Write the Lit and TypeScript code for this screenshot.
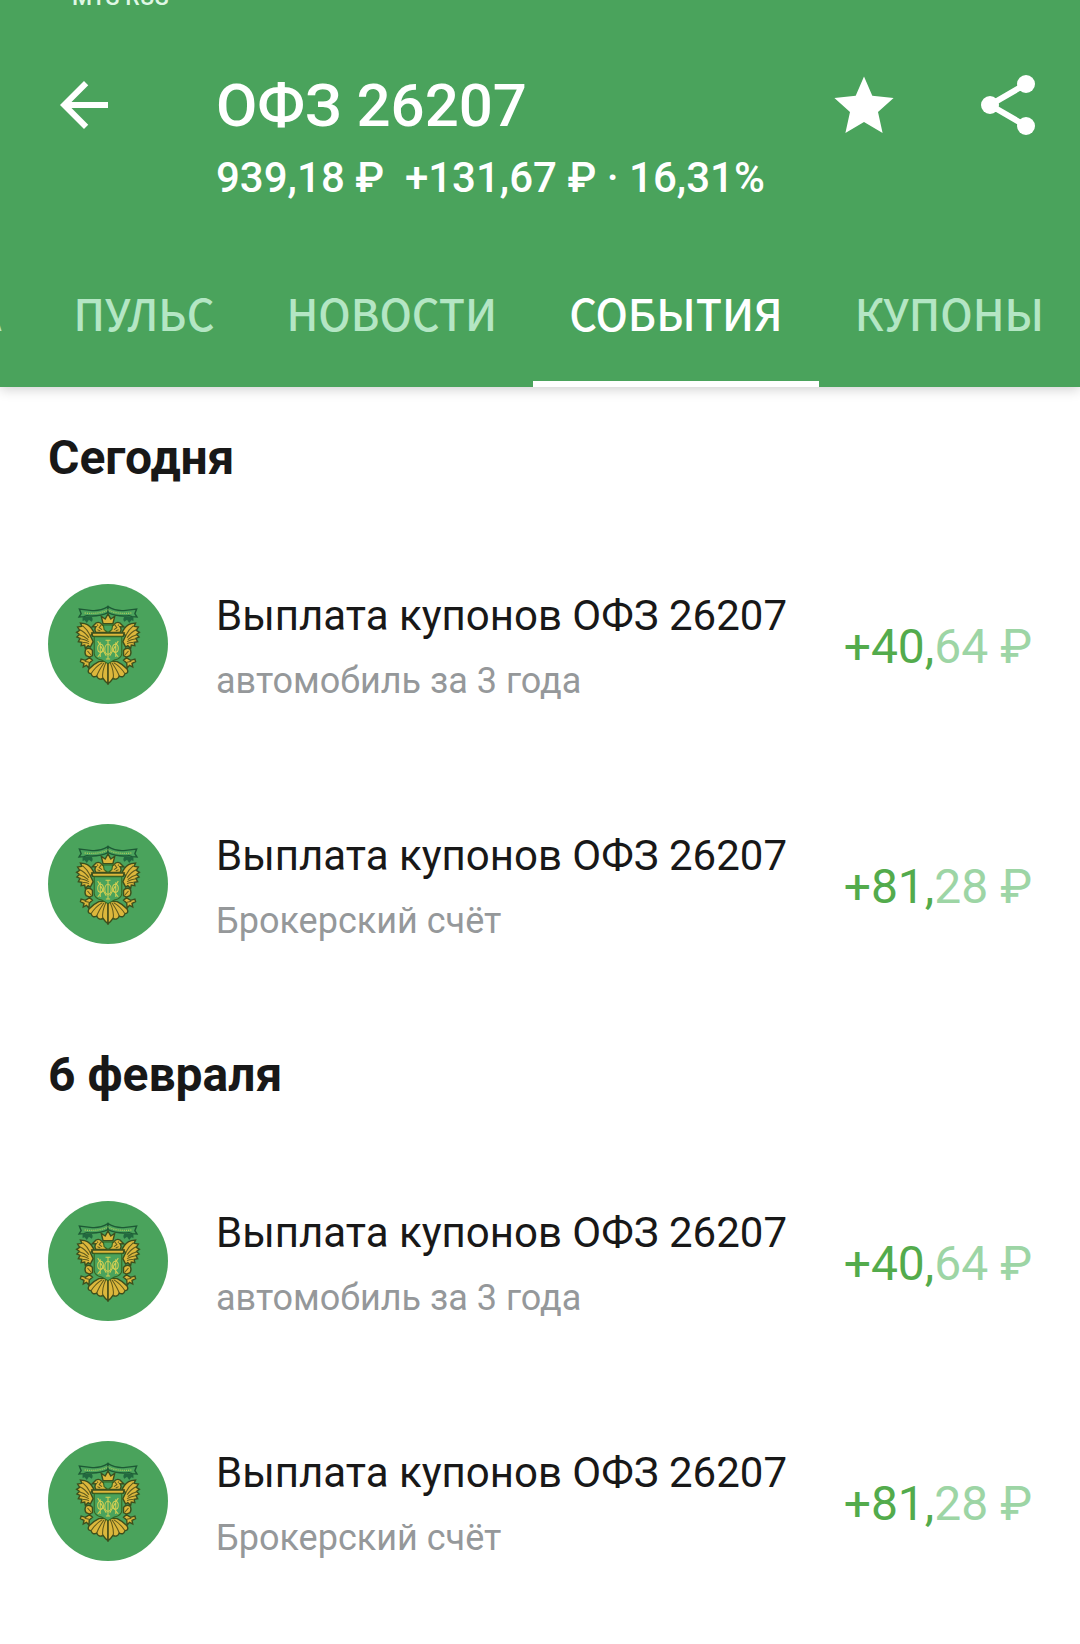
import { html, svg, css, LitElement } from 'lit';
import { customElement, property, state } from 'lit/decorators.js';
import { classMap } from 'lit/directives/class-map.js';

interface CouponEvent {
    title: string;
    account: string;
    whole: string;
    fraction: string;
}

interface EventGroup {
    date: string;
    events: CouponEvent[];
}

const coupons: CouponEvent[] = [
    { title: 'Выплата купонов ОФЗ 26207', account: 'автомобиль за 3 года', whole: '+40,', fraction: '64 ₽' },
    { title: 'Выплата купонов ОФЗ 26207', account: 'Брокерский счёт', whole: '+81,', fraction: '28 ₽' },
];

const groups: EventGroup[] = [
    { date: 'Сегодня', events: coupons },
    { date: '6 февраля', events: coupons },
];

const tabs = ['А', 'ПУЛЬС', 'НОВОСТИ', 'СОБЫТИЯ', 'КУПОНЫ'];

// One half of the eagle, drawn left of x = 0 and mirrored for the other side
const eagleHalf = svg`
    <path class="ribbon" d="M0 35 Q-24 50 -50 46 L-81 42 L-76 56 L-82 66 L-68 65 L-60 62 Q-26 66 0 53Z" />
    <path class="shade" d="M-72 66 L-48 64 Q-40 72 -46 80 L-54 74 L-60 84 L-66 76 L-72 78Z" />
    <path class="gold" d="M-40 112 Q-50 90 -66 86 L-78 84 L-74 94 L-86 96 L-80 106 L-89 112 L-81 118 L-88 126 L-79 130 L-84 140 L-74 142 L-76 152 L-66 150 L-64 160 L-56 152 L-50 156 L-42 140 L-50 122Z" />
    <path class="line" d="M-72 92 Q-58 104 -50 122 M-80 104 Q-66 110 -54 128 M-82 119 Q-68 122 -56 134 M-79 131 Q-66 132 -54 140 M-72 143 Q-62 142 -54 146" />
    <path class="gold" d="M-4 112 Q-8 94 -16 90 Q-24 78 -34 84 L-45 96 L-34 95 Q-40 104 -34 112Z" />
    <path class="line" d="M-18 88 L-25 98 L-17 104 M-31 89 L-28 92 M-30 104 L-22 108" />
    <path class="gold" d="M-44 166 Q-52 156 -62 162 Q-68 172 -62 182 L-52 186 L-44 182Z" />
    <path class="gold" d="M-52 188 L-64 196 L-76 192 L-78 200 L-68 205 L-70 216 L-61 211 L-54 219 L-53 204 L-44 196Z" />
    <path class="line" d="M-58 168 L-48 180 M-66 199 L-54 202" />
    <path class="gold" d="M-6 198 L-26 200 Q-42 208 -54 222 Q-60 234 -48 236 Q-44 250 -32 243 Q-27 257 -14 250 Q-8 260 0 266 L0 198Z" />
    <path class="line" d="M-16 203 Q-36 216 -47 235 M-11 203 Q-26 226 -32 243 M-6 203 Q-17 228 -15 250 M0 206 V262" />
`;

const emblem = html`
    <svg viewBox="0 0 360 360" aria-hidden="true">
        <g transform="translate(180 33) scale(1.06 1)">
            <g>${eagleHalf}</g>
            <g transform="scale(-1 1)">${eagleHalf}</g>
            <path class="inscription" d="M-66 54 Q-28 59 0 45 Q28 59 66 54" />
            <path class="gold" d="M-14 86 L-19 64 L-8 72 L0 57 L8 72 L19 64 L14 86Z" />
            <path class="shield" d="M-13 90 L13 90 L11 104 L0 112 L-11 104Z" />
            <path class="gold" d="M-46 114 L46 114 L43 124 L-43 124Z" />
            <path class="shield" d="M-39 125 L39 125 L39 176 Q38 190 18 195 L0 206 L-18 195 Q-38 190 -39 176Z" />
            <path class="monogram" d="M0 136 V192 M-7 136 H7 M-6 192 H6 M-29 138 L-5 182 M29 138 L5 182 M-29 186 L-14 164 M29 186 L14 164 M-22 142 V186 M22 142 V186" />
            <ellipse class="monogram" cx="-21" cy="160" rx="8" ry="12" />
            <ellipse class="monogram" cx="21" cy="160" rx="8" ry="12" />
            <ellipse class="monogram" cx="0" cy="163" rx="9" ry="15" />
        </g>
    </svg>
`;

@customElement('event-row')
export class EventRow extends LitElement {
    static styles = css`
        :host {
            display: flex;
            align-items: center;
            gap: 48px;
            padding: 60px 48px;
        }

        .logo {
            flex: none;
            width: 120px;
            height: 120px;
            border-radius: 50%;
            background: #4aa35c;
        }

        .logo svg {
            display: block;
        }

        .gold {
            fill: #dcb73c;
            stroke: #3c4f1d;
            stroke-width: 4;
        }

        .line {
            fill: none;
            stroke: #5f5a1c;
            stroke-width: 3;
        }

        .ribbon {
            fill: #4aa35c;
            stroke: #1d5a35;
            stroke-width: 4;
        }

        .shade {
            fill: #22693f;
        }

        .shield {
            fill: #4aa35c;
            stroke: #35641f;
            stroke-width: 3;
        }

        .inscription {
            fill: none;
            stroke: #a9c95c;
            stroke-width: 4;
            stroke-dasharray: 3 3;
        }

        .monogram {
            fill: none;
            stroke: #d3cf52;
            stroke-width: 3;
        }

        .body {
            flex: 1;
            min-width: 0;
            display: flex;
            align-items: center;
            justify-content: space-between;
            gap: 24px;
            padding-top: 6px;
        }

        .text {
            display: flex;
            flex-direction: column;
            gap: 20px;
        }

        .title {
            margin: 0;
            font-weight: 400;
            font-size: 42px;
            line-height: 48px;
            color: #181818;
        }

        .account {
            margin: 0;
            font-size: 36px;
            line-height: 42px;
            color: #95989a;
        }

        .amount {
            font-size: 48px;
            line-height: 56px;
            white-space: nowrap;
            color: #53ab4c;
        }

        .fraction {
            color: #9dd5a5;
        }
    `;

    @property({ attribute: false })
    event: CouponEvent;

    protected render() {
        return html`
            <div class="logo">${emblem}</div>
            <div class="body">
                <div class="text">
                    <h3 class="title">${this.event.title}</h3>
                    <p class="account">${this.event.account}</p>
                </div>
                <div class="amount">${this.event.whole}<span class="fraction">${this.event.fraction}</span></div>
            </div>
        `;
    }
}

@customElement('app-root')
export class AppRoot extends LitElement {
    static styles = css`
        :host {
            display: block;
            min-height: 100vh;
            background: #fff;
            font-family: Roboto, sans-serif;
        }

        .header {
            background: #4aa35c;
            color: #fff;
            box-shadow: 0 2px 12px rgba(0, 0, 0, 0.2);
        }

        .status {
            display: flex;
            align-items: flex-end;
            height: 10px;
            padding: 0 72px;
            overflow: hidden;
            font-weight: 500;
            font-size: 23px;
            line-height: 24px;
            color: #dff7e4;
        }

        .toolbar {
            display: flex;
            align-items: flex-start;
            padding: 59px 36px 41px 48px;
        }

        .icon {
            flex: none;
            width: 72px;
            height: 72px;
            padding: 0;
            border: 0;
            background: none;
            color: inherit;
        }

        .icon svg {
            display: block;
            fill: currentColor;
        }

        .heading {
            flex: 1;
            margin-left: 96px;
        }

        .name {
            margin: 0;
            font-weight: 500;
            font-size: 60px;
            line-height: 74px;
        }

        .price {
            margin: 11px 0 0;
            font-weight: 500;
            font-size: 42px;
            line-height: 48px;
            white-space: pre;
        }

        .actions {
            display: flex;
            gap: 72px;
        }

        .tabs {
            display: flex;
            justify-content: flex-end;
            overflow: hidden;
        }

        .tab {
            flex: none;
            height: 144px;
            padding: 0 36px;
            border: 0;
            border-bottom: 6px solid transparent;
            background: none;
            font-family: 'Noto Sans CJK SC', 'Noto Sans', sans-serif;
            font-weight: 500;
            font-size: 43px;
            color: #b4e6c4;
        }

        .tab.active {
            border-bottom-color: #fff;
            color: #fff;
        }

        .date {
            margin: 0;
            padding: 43px 48px 38px;
            font-weight: 700;
            font-size: 48px;
            line-height: 56px;
            color: #181818;
        }
    `;

    @state()
    private active = 'СОБЫТИЯ';

    protected render() {
        return html`
            <header class="header">
                <div class="status">MTS RUS</div>
                <div class="toolbar">
                    <button class="icon" aria-label="Назад">
                        <svg viewBox="0 0 24 24"><path d="M20 11H7.83l5.59-5.59L12 4l-8 8 8 8 1.41-1.41L7.83 13H20z" /></svg>
                    </button>
                    <div class="heading">
                        <h1 class="name">ОФЗ 26207</h1>
                        <p class="price">939,18 ₽  +131,67 ₽ · 16,31%</p>
                    </div>
                    <div class="actions">
                        <button class="icon" aria-label="В избранное">
                            <svg viewBox="0 0 72 72">
                                <path d="M36 7.5L44.3 26.7L65.6 29L50 43L54.6 64L36 53L17.4 64L22 43L6.4 29L27.7 26.7Z" />
                            </svg>
                        </button>
                        <button class="icon" aria-label="Поделиться">
                            <svg viewBox="0 0 72 72">
                                <path d="M54 15L18 36L54 57" fill="none" stroke="currentColor" stroke-width="6" />
                                <circle cx="54" cy="15" r="9" />
                                <circle cx="18" cy="36" r="9" />
                                <circle cx="54" cy="57" r="9" />
                            </svg>
                        </button>
                    </div>
                </div>
                <nav class="tabs" role="tablist">
                    ${tabs.map((tab) => html`
                        <button
                            class=${classMap({ tab: true, active: tab === this.active })}
                            role="tab"
                            aria-selected=${tab === this.active}
                            @click=${() => (this.active = tab)}
                        >${tab}</button>
                    `)}
                </nav>
            </header>
            <main>
                ${groups.map((group) => html`
                    <section>
                        <h2 class="date">${group.date}</h2>
                        ${group.events.map((event) => html`<event-row .event=${event}></event-row>`)}
                    </section>
                `)}
            </main>
        `;
    }
}
